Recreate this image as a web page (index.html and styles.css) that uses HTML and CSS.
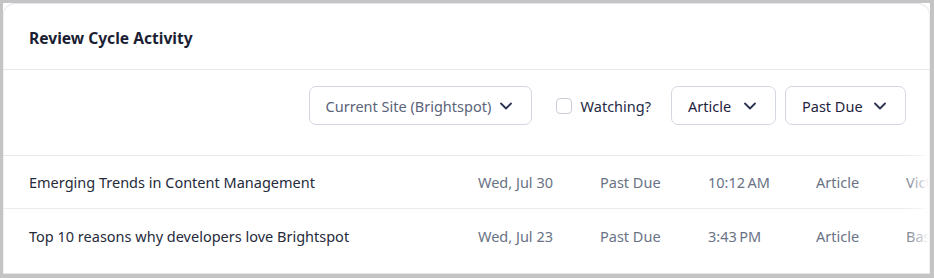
FILE: index.html
```html
<!DOCTYPE html>
<html>
<head>
<meta charset="utf-8">
<link rel="stylesheet" href="styles.css">
</head>
<body>
<div class="frame">
  <div class="card">
    <div class="card-head">
      <h2 class="title">Review Cycle Activity</h2>
    </div>
    <div class="scroller">
      <div class="filters">
        <button class="dropdown dd-site"><span class="dd-label muted">Current Site (Brightspot)</span>
          <svg class="chev" width="12" height="8" viewBox="0 0 12 8"><path d="M1 1.5 L6 6.5 L11 1.5" fill="none" stroke="#2b3150" stroke-width="1.8" stroke-linecap="round" stroke-linejoin="round"/></svg>
        </button>
        <label class="watch"><span class="box"></span><span class="watch-text">Watching?</span></label>
        <button class="dropdown dd-type"><span class="dd-label">Article</span>
          <svg class="chev" width="12" height="8" viewBox="0 0 12 8"><path d="M1 1.5 L6 6.5 L11 1.5" fill="none" stroke="#2b3150" stroke-width="1.8" stroke-linecap="round" stroke-linejoin="round"/></svg>
        </button>
        <button class="dropdown dd-status"><span class="dd-label">Past Due</span>
          <svg class="chev" width="12" height="8" viewBox="0 0 12 8"><path d="M1 1.5 L6 6.5 L11 1.5" fill="none" stroke="#2b3150" stroke-width="1.8" stroke-linecap="round" stroke-linejoin="round"/></svg>
        </button>
      </div>
      <div class="rows">
        <div class="row">
          <span class="c-title">Emerging Trends in Content Management</span>
          <span class="c">Wed, Jul 30</span>
          <span class="c">Past Due</span>
          <span class="c">10:12&#8239;AM</span>
          <span class="c">Article</span>
          <span class="c">Victoria Lane</span>
        </div>
        <div class="row">
          <span class="c-title">Top 10 reasons why developers love Brightspot</span>
          <span class="c">Wed, Jul 23</span>
          <span class="c">Past Due</span>
          <span class="c">3:43&#8239;PM</span>
          <span class="c">Article</span>
          <span class="c">Basil Thompson</span>
        </div>
      </div>
      <div class="fade"></div>
    </div>
  </div>
</div>
</body>
</html>
```

FILE: styles.css
```css
* { box-sizing: border-box; }
html, body { margin: 0; padding: 0; }
body {
  width: 934px;
  height: 278px;
  background: #c4c4c4;
  font-family: "Noto Sans", "Open Sans", sans-serif;
  overflow: hidden;
}
.frame {
  margin: 3px 4px 0 3px;
  width: 927px;
  height: 271px;
  background: #ffffff;
  border-bottom: 1px solid #e4e6ea;
}
.card {
  height: 270px;
  background: #fff;
  border-radius: 12px 12px 0 0;
  border-top: 1px solid #dfe3ea;
  box-shadow: inset 1px 0 0 #eef0f3, inset -1px 0 0 #eef0f3;
  overflow: hidden;
}
.card-head {
  height: 66px;
  padding-left: 26px;
  display: flex;
  align-items: center;
  border-bottom: 1px solid #e6e8ec;
}
.title {
  margin: 0;
  font-size: 15.6px;
  font-weight: 700;
  color: #1c1f33;
  position: relative;
  top: 1px;
}
.scroller {
  position: relative;
  width: 926px;
  overflow: hidden;
}
.filters {
  height: 86px;
  display: flex;
  align-items: flex-start;
  justify-content: flex-end;
  padding: 16px 23px 0 0;
  border-bottom: 1px solid #e6e8ec;
}
.dropdown {
  height: 39px;
  display: flex;
  align-items: center;
  justify-content: space-between;
  background: #fff;
  border: 1px solid #d3d7df;
  border-radius: 7px;
  padding: 0 19px 0 16px;
  font-family: inherit;
  font-size: 14.5px;
  color: #1f2440;
  white-space: nowrap;
  cursor: pointer;
}
.dd-label { line-height: 20px; }
.muted { color: #5b6479; }
.dd-site { width: 223px; padding-left: 16px; margin-right: 24px; }
.dd-type { width: 105px; margin-right: 9px; }
.dd-status { width: 121px; }
.chev { display: block; flex: none; }
.watch {
  height: 39px;
  display: flex;
  align-items: center;
  gap: 9px;
  margin-right: 20px;
  font-size: 14.5px;
  color: #242a44;
  white-space: nowrap;
}
.box {
  width: 16px;
  height: 16px;
  border: 1px solid #c9cdd5;
  border-radius: 4px;
  background: #fff;
}
.row {
  display: grid;
  grid-template-columns: 449px 122px 108px 108px 90px 200px;
  height: 53px;
  align-items: center;
  padding-left: 26px;
  border-bottom: 1px solid #e9ebee;
  font-size: 14.5px;
  white-space: nowrap;
}
.row:last-child { border-bottom: none; }
.c-title { color: #262b3b; }
.c { color: #6a7285; }
.fade {
  position: absolute;
  right: 0;
  top: 0;
  bottom: 0;
  width: 26px;
  background: linear-gradient(to right, rgba(255,255,255,0), rgba(255,255,255,0.55) 65%, #ffffff);
  pointer-events: none;
}
```
